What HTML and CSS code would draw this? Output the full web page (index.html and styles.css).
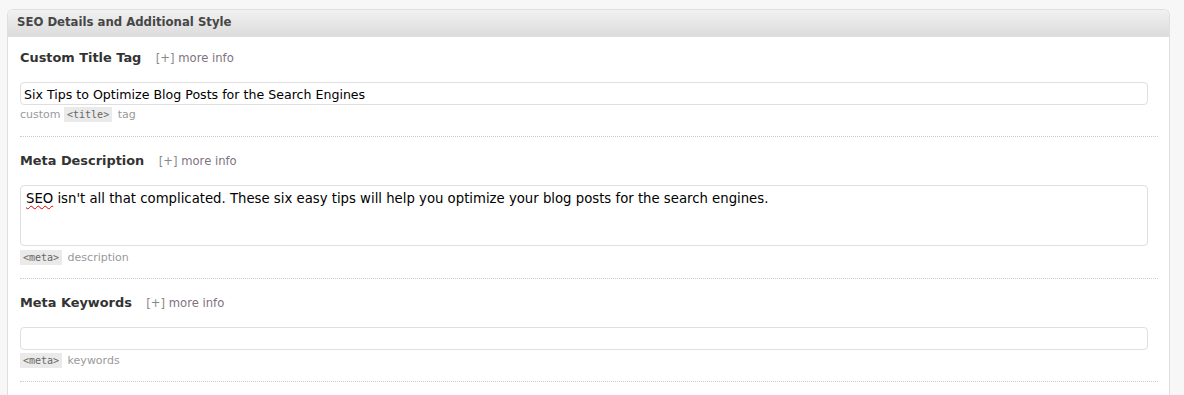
FILE: index.html
```html
<!DOCTYPE html>
<html lang="en">
<head>
    <meta charset="UTF-8">
    <title>SEO Details and Additional Style</title>
    <link rel="stylesheet" href="styles.css">
</head>
<body>
    <div class="postbox">
        <h3 class="hndle">SEO Details and Additional Style</h3>
        <div class="inside">
            <div class="field">
                <p class="field-title">Custom Title Tag <a class="more" href="#"><span class="plus">[+]</span> more info</a></p>
                <input class="text" type="text" value="Six Tips to Optimize Blog Posts for the Search Engines">
                <p class="hint">custom <code>&lt;title&gt;</code> tag</p>
            </div>
            <div class="field">
                <p class="field-title">Meta Description <a class="more" href="#"><span class="plus">[+]</span> more info</a></p>
                <div class="textarea"><span class="spell">SEO</span> isn't all that complicated. These six easy tips will help you optimize your blog posts for the search engines.</div>
                <p class="hint"><code>&lt;meta&gt;</code> description</p>
            </div>
            <div class="field">
                <p class="field-title">Meta Keywords <a class="more" href="#"><span class="plus">[+]</span> more info</a></p>
                <input class="text" type="text" value="">
                <p class="hint"><code>&lt;meta&gt;</code> keywords</p>
            </div>
        </div>
    </div>
</body>
</html>
```

FILE: styles.css
```css
body {
    margin: 0;
    padding: 9px 14px 0 7px;
    background-color: #f7f7f7;
    font-family: "DejaVu Sans", Verdana, sans-serif;
}
.postbox {
    box-sizing: border-box;
    min-height: calc(100vh - 9px);
    background-color: #fff;
    border: 1px solid #dfdfdf;
    border-bottom: none;
    border-radius: 6px 6px 0 0;
}
.hndle {
    margin: 0;
    height: 26px;
    line-height: 25px;
    padding: 0 9px;
    font-size: 11.7px;
    color: #464646;
    background: linear-gradient(to bottom, #f1f1f1, #dcdcdc);
    border-bottom: 1px solid #dfdfdf;
    border-radius: 6px 6px 0 0;
}
.inside {
    padding: 10px 11px 0 12px;
}
.field {
    border-bottom: 1px dotted #ccc;
    padding-bottom: 13px;
    margin-bottom: 13px;
}
.field:last-child {
    margin-bottom: 0;
}
.field-title {
    margin: 0 0 13px;
    font-size: 12.9px;
    font-weight: bold;
    color: #333;
    line-height: 21px;
}
.more {
    margin-left: 10px;
    font-size: 11.6px;
    font-weight: normal;
    color: #80727f;
    text-decoration: none;
}
.plus {
    color: #888;
}
.text, .textarea {
    display: block;
    box-sizing: border-box;
    width: 99.1%;
    margin: 0;
    height: 23px;
    padding: 1px 5px 0;
    font-family: "DejaVu Sans", Verdana, sans-serif;
    font-size: 12.6px;
    color: #000;
    border: 1px solid #dfdfdf;
    border-radius: 4px;
    background-color: #fff;
}
.text {
    padding-left: 3px;
}
.textarea {
    height: 61px;
    padding: 5px 5px;
    font-size: 13.25px;
    line-height: 16px;
}
.field:nth-child(2) .hint {
    margin-top: 4px;
}
.field:nth-child(2) {
    padding-bottom: 12px;
}
.field:nth-child(3) .hint {
    margin-top: 3px;
}
.field:nth-child(3) {
    padding-bottom: 12px;
}
.spell {
    text-decoration: underline wavy #e00000;
    text-decoration-thickness: 1px;
    text-underline-offset: 2px;
}
.hint {
    margin: 2px 0 0;
    font-size: 11px;
    color: #999;
    line-height: 16px;
}
.hint code {
    display: inline-block;
    padding: 0 3px;
    margin-right: 2px;
    font-family: "DejaVu Sans Mono", monospace;
    font-size: 10px;
    color: #666;
    background-color: #eaeaea;
    line-height: 15px;
}
```
